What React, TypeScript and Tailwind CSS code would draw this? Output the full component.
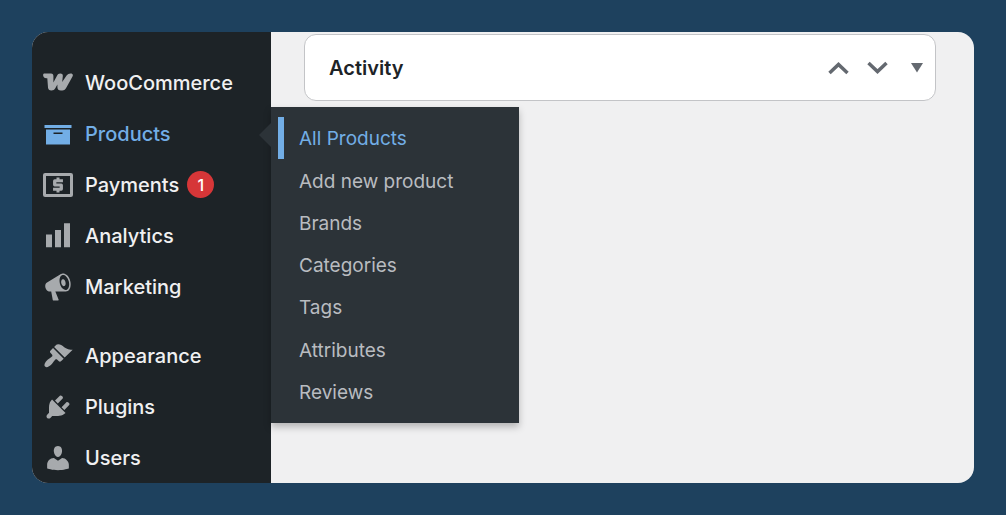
import type { ReactNode } from "react";

const shapes: Record<string, ReactNode> = {
  archive: <path d="M19 4v2H1V4h18zM2 7h16v10H2V7zm11 3V9H7v1h6z" />,
  payments: (
    <>
      <path fillRule="evenodd" d="M1.400 2H18.600A1.400 1.400 0 0 1 20 3.400V16.600A1.400 1.400 0 0 1 18.600 18H1.400A1.400 1.400 0 0 1 0 16.600V3.400A1.400 1.400 0 0 1 1.400 2zM2 4v12h16V4z" />
      <path d="M9 5h2v1.200h2.300v2H8.900v.8h3.300a1.100 1.100 0 0 1 1.100 1.100v2.600a1.100 1.100 0 0 1-1.100 1.100H11V15H9v-1.200H6.700v-2h4.400V11H7.800a1.100 1.100 0 0 1-1.100-1.100V7.300a1.100 1.100 0 0 1 1.100-1.100H9z" />
    </>
  ),
  chart: <path d="M18 17.500V1.500h-4v16h4zm-6 0v-11.500H8v11.500h4zm-6 0v-8.500H2v8.500h4z" />,
  megaphone: (
    <path d="M18.15 5.94c.46 1.62.38 3.22-.02 4.48-.42 1.28-1.26 2.18-2.3 2.48-.16.06-.26.06-.4.06-.06.02-.12.02-.18.02-.06.02-.14.02-.22.02h-6.8l2.22 5.5c.02.14-.06.26-.14.34-.08.1-.24.16-.34.16H6.95c-.1 0-.26-.06-.34-.16-.08-.08-.16-.2-.14-.34l-1-5.5H4.25l-.02-.02c-.5.06-1.08-.18-1.54-.62s-.88-1.08-1.06-1.88c-.24-.8-.2-1.56-.02-2.2.18-.62.58-1.08 1.06-1.3l.02-.02 9-5.4c.1-.06.18-.1.24-.16.06-.04.14-.08.24-.12.16-.08.28-.12.5-.18 1.04-.3 2.24.1 3.22.98s1.84 2.24 2.26 3.86zm-2.58 5.98h-.02c.4-.1.74-.34 1.04-.7.58-.7.86-1.76.86-3.04 0-.64-.1-1.3-.28-1.98-.34-1.36-1.02-2.5-1.78-3.24s-1.68-1.1-2.46-.88c-.82.22-1.4.96-1.7 2-.32 1.04-.28 2.36.06 3.72.38 1.36 1 2.5 1.8 3.24.78.74 1.62 1.1 2.48.88zm-2.54-7.08c.22-.04.42-.02.62.04.38.16.76.48 1.02 1s.42 1.2.42 1.78c0 .3-.04.56-.12.8-.18.48-.44.84-.86.94-.34.1-.8-.06-1.14-.4s-.64-.86-.78-1.5c-.18-.62-.12-1.24.02-1.72s.48-.84.82-.94z" />
  ),
  brush: (
    <path d="M14.48 11.06L7.41 3.99l1.5-1.5c.5-.56 2.3-.47 3.51.32 1.21.8 1.43 1.28 2.91 2.1 1.18.64 2.45 1.26 4.45.85zm-.71.71L6.7 4.7 4.93 6.47c-.39.39-.39 1.02 0 1.41l1.06 1.06c.39.39.39 1.03 0 1.42-.6.6-1.43 1.11-2.21 1.69-.35.26-.7.53-1.01.84C1.43 14.23.4 16.08 1.4 17.07c.99 1 2.84-.03 4.18-1.36.31-.31.58-.66.85-1.02.57-.78 1.08-1.61 1.69-2.21.39-.39 1.02-.39 1.41 0l1.06 1.06c.39.39 1.02.39 1.41 0z" />
  ),
  plug: (
    <path d="M13.11 4.36L9.87 7.6 8 5.73l3.24-3.24c.35-.34 1.05-.2 1.56.32.52.51.66 1.21.31 1.55zm-8 1.77l.91-1.12 9.01 9.01-1.19.84c-.71.71-2.63 1.16-3.82 1.16H6.14L4.9 17.26c-.59.59-1.54.59-2.12 0-.59-.58-.59-1.53 0-2.12l1.24-1.24v-3.88c0-1.13.4-3.19 1.09-3.89zm7.26 3.97l3.24-3.24c.34-.35 1.04-.21 1.55.31.52.51.66 1.21.31 1.55l-3.24 3.25z" />
  ),
  user: (
    <path d="M10 9.25c-2.27 0-2.73-3.44-2.73-3.44C7 4.02 7.82 2 9.97 2c2.16 0 2.98 2.02 2.71 3.81 0 0-.41 3.44-2.68 3.44zm0 2.57L12.72 10c2.39 0 4.52 2.33 4.52 4.53v2.49s-3.65 1.13-7.24 1.13c-3.65 0-7.24-1.13-7.24-1.13v-2.49c0-2.25 1.94-4.48 4.47-4.48z" />
  ),
};

function WooLogo() {
  return (
    <svg viewBox="0 0 30 30" className="size-[30px] shrink-0" fill="currentColor" aria-hidden="true">
      <path d="M1.500 5.500H8C9.800 5.500 10.400 6.500 10.400 8.300V14.500L14 7.700C14.800 6.200 15.600 5.500 17.200 5.500C19.200 5.500 20 6.600 19.800 8.300L19.200 14L23.600 7.600C24.600 6.200 25.900 5.500 27.600 5.500C29.600 5.500 30.400 6.800 29.500 8.500L23.400 19.500C22.400 21.500 21.200 22.500 19.200 22.500H17.900C15.700 22.500 14.500 21.500 14.400 19.300V16.500L12.300 20.300C11.400 21.900 10.300 22.500 8.400 22.500C6.200 22.500 5.200 21.500 5 19.500L4.300 10.300H3.300C1.500 10.300.3 9 .1 7.300C0 6.200.5 5.500 1.500 5.500Z" />
    </svg>
  );
}

function Icon({ name }: { name: string }) {
  if (name === "woo") return <WooLogo />;
  return (
    <svg viewBox="0 0 20 20" className="size-[30px] shrink-0" fill="currentColor" aria-hidden="true">
      {shapes[name]}
    </svg>
  );
}

const groups = [
  [
    { label: "WooCommerce", icon: "woo" },
    { label: "Products", icon: "archive" },
    { label: "Payments", icon: "payments", badge: 1 },
    { label: "Analytics", icon: "chart" },
    { label: "Marketing", icon: "megaphone" },
  ],
  [
    { label: "Appearance", icon: "brush" },
    { label: "Plugins", icon: "plug" },
    { label: "Users", icon: "user" },
  ],
];

const submenu = ["All Products", "Add new product", "Brands", "Categories", "Tags", "Attributes", "Reviews"];

function MenuItem({ label, icon, badge }: { label: string; icon: string; badge?: number }) {
  const open = label === "Products";
  return (
    <li className="relative">
      <a href="#" className={open ? "flex h-[51px] items-center pl-[11px] text-[#72aee6]" : "flex h-[51px] items-center pl-[11px] text-[#f0f0f1]"}>
        <span className={open ? "text-[#72aee6]" : "text-[#a7aaad]"}>
          <Icon name={icon} />
        </span>
        <span className="ml-3">{label}</span>
        {badge && (
          <span className="ml-2 flex size-[27px] items-center justify-center rounded-full bg-[#d63638] text-base text-white">{badge}</span>
        )}
      </a>
      {open && (
        <>
          <ul className="absolute left-full -top-px z-10 flex h-[316px] w-[248px] flex-col bg-[#2c3338] py-2.5 text-[19px] font-normal shadow-[0_4px_7px_rgba(0,0,0,0.25)]">
            {submenu.map((item, i) => (
              <li key={item} className="flex flex-1">
                <a
                  href="#"
                  className={
                    i === 0
                      ? "ml-[7px] flex flex-1 items-center border-l-6 border-[#72aee6] pl-[15px] pt-[3px] text-[#72aee6]"
                      : "flex flex-1 items-center pl-7 pt-[3px] text-[#b9bcc0]"
                  }
                >
                  {item}
                </a>
              </li>
            ))}
          </ul>
          <span className="absolute right-0 top-[15px] z-20 border-y-12 border-r-12 border-y-transparent border-r-[#2c3338]" />
        </>
      )}
    </li>
  );
}

export default function App() {
  return (
    <div className="min-h-screen bg-[#1e415e] p-8 font-['Inter',sans-serif]">
      <div className="flex min-h-[calc(100vh-64px)] overflow-hidden rounded-2xl bg-[#f0f0f1]">
        <nav aria-label="Admin menu" className="w-[239px] shrink-0 bg-[#1d2327] pt-[25px] text-xl font-medium">
          {groups.map((group, i) => (
            <ul key={i} className={i > 0 ? "mt-[18px]" : ""}>
              {group.map((item) => (
                <MenuItem key={item.label} {...item} />
              ))}
            </ul>
          ))}
        </nav>
        <main className="flex-1 pl-[33px] pr-[38px] pt-0.5">
          <section className="flex h-[67px] items-center justify-between rounded-xl border border-[#c3c4c7] bg-white pl-6 pr-3 text-[#1d2327]">
            <h2 className="text-xl font-semibold">Activity</h2>
            <div className="flex items-center text-[#646970]">
              <button type="button" aria-label="Move up" className="flex w-[39px] justify-center">
                <svg width="22" height="14" viewBox="0 0 22 14" fill="none" stroke="currentColor" strokeWidth="3.500">
                  <path d="M1.500 12 10.500 3.500l9 8.500" />
                </svg>
              </button>
              <button type="button" aria-label="Move down" className="flex w-[39px] justify-center">
                <svg width="22" height="14" viewBox="0 0 22 14" fill="none" stroke="currentColor" strokeWidth="3.500">
                  <path d="M1.500 2 10.500 10.500l9-8.500" />
                </svg>
              </button>
              <button type="button" aria-label="Toggle panel" className="ml-[14px] flex">
                <svg width="12" height="10" viewBox="0 0 12 10" fill="currentColor">
                  <path d="M0 0h12L6 9.500z" />
                </svg>
              </button>
            </div>
          </section>
        </main>
      </div>
    </div>
  );
}
